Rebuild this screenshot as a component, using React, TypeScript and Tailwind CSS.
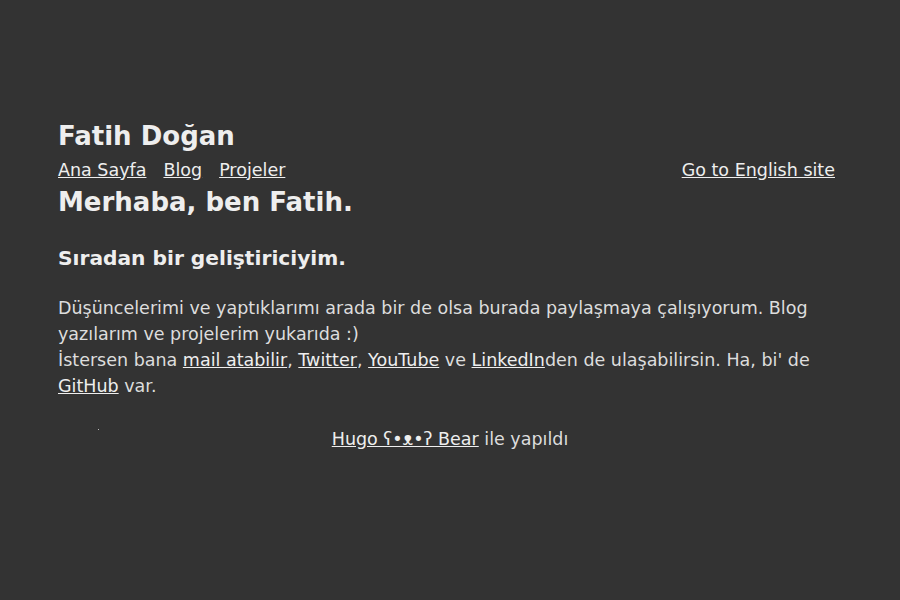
export default function App() {
  return (
    <div className="min-h-[600px] bg-[#333333] text-[#dddddd] font-['DejaVu_Sans',Verdana,sans-serif] text-[17.5px] leading-[26px]">
      <div className="mx-[58px] pt-[119px]">
        <header>
          <a href="#" className="block text-[26px] leading-[34px] font-bold text-[#eeeeee] no-underline">
            Fatih Doğan
          </a>
          <nav className="flex justify-between items-center mt-[1px] h-[31px]">
            <div className="flex gap-[17px]">
              <a href="#" className="underline text-[#eeeeee]">Ana Sayfa</a>
              <a href="#" className="underline text-[#eeeeee]">Blog</a>
              <a href="#" className="underline text-[#eeeeee]">Projeler</a>
            </div>
            <a href="#" className="underline text-[#eeeeee] mr-[7px]">Go to English site</a>
          </nav>
        </header>
        <main>
          <h1 className="text-[26px] leading-[34px] font-bold text-[#eeeeee]">Merhaba, ben Fatih.</h1>
          <h3 className="mt-[26px] text-[20.2px] leading-[26px] font-bold text-[#eeeeee]">Sıradan bir geliştiriciyim.</h3>
          <p className="mt-[24px]">
            Düşüncelerimi ve yaptıklarımı arada bir de olsa burada paylaşmaya çalışıyorum. Blog yazılarım ve projelerim yukarıda :)
            <br />
            İstersen bana <a href="#" className="underline text-[#eeeeee]">mail atabilir</a>,{" "}
            <a href="#" className="underline text-[#eeeeee]">Twitter</a>,{" "}
            <a href="#" className="underline text-[#eeeeee]">YouTube</a> ve{" "}
            <a href="#" className="underline text-[#eeeeee]">LinkedIn</a>den de ulaşabilirsin. Ha, bi' de{" "}
            <a href="#" className="underline text-[#eeeeee]">GitHub</a> var.
          </p>
        </main>
        <footer className="relative mt-[27px] text-center">
          <span className="absolute left-[40px] top-[3px] w-[1px] h-[1px] bg-[#bbbbbb]" />
          <a href="#" className="underline text-[#eeeeee]">Hugo ʕ•ᴥ•ʔ Bear</a> ile yapıldı
        </footer>
      </div>
    </div>
  );
}
